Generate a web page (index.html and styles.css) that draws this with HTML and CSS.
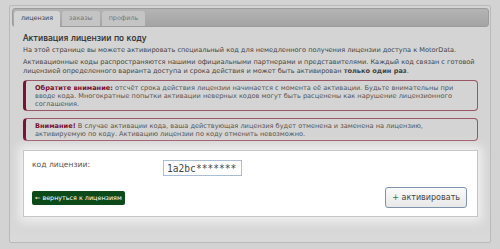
FILE: index.html
```
<!DOCTYPE html>
<html lang="ru">
<head>
<meta charset="utf-8">
<link rel="stylesheet" href="styles.css">
</head>
<body>
<div class="panel">
  <div class="tabbar">
    <div class="tab active">лицензия</div>
    <div class="tab">заказы</div>
    <div class="tab">профиль</div>
  </div>
  <div class="content">
    <h1 class="title">Активация лицензии по коду</h1>
    <p class="text">На этой странице вы можете активировать специальный код для немедленного получения лицензии доступа к MotorData.</p>
    <p class="text text2">Активационные коды распространяются нашими официальными партнерами и представителями. Каждый код связан с готовой лицензией определенного варианта доступа и срока действия и может быть активирован <b>только один раз</b>.</p>
    <div class="notice"><b>Обратите внимание:</b> отсчёт срока действия лицензии начинается с момента её активации. Будьте внимательны при вводе кода. Многократные попытки активации неверных кодов могут быть расценены как нарушение лицензионного соглашения.</div>
    <div class="notice notice2"><b>Внимание!</b> В случае активации кода, ваша действующая лицензия будет отменена и заменена на лицензию, активируемую по коду. Активацию лицензии по коду отменить невозможно.</div>
    <div class="form">
      <div class="row">
        <label class="label">код лицензии:</label>
        <input class="input" type="text" value="1a2bc*******">
      </div>
      <div class="actions">
        <button class="back">← вернуться к лицензиям</button>
        <button class="activate"><span class="plus">+</span> активировать</button>
      </div>
    </div>
  </div>
</div>
</body>
</html>
```
FILE: styles.css
```
* { box-sizing: border-box; }
html, body { margin: 0; padding: 0; }
body {
  background: #d3d3d3;
  font-family: "DejaVu Sans", Verdana, sans-serif;
  color: #444;
  width: 500px;
  height: 249px;
  overflow: hidden;
  padding: 5px 9px 0 9px;
}
.panel {
  width: 482px;
  height: 238px;
  border: 1px solid #b9b9b9;
  border-radius: 2px;
  background: linear-gradient(#d4d4d4, #d4d4d4 85%, #dadada);
  padding: 1px 1px 0 2px;
}
.tabbar {
  height: 19px;
  margin-top: 1px;
  background: linear-gradient(#b4b4b4, #a4a4a4);
  border: 1px solid #9c9c9c;
  border-radius: 3px;
  display: flex;
  align-items: flex-end;
  gap: 2px;
  padding-left: 1px;
}
.tab {
  height: 15px;
  line-height: 14px;
  padding: 0 7px;
  font-size: 6.4px;
  color: #777;
  background: #c4c4c4;
  border-radius: 3px 3px 0 0;
}
.tab.active {
  background: #d4d4d4;
  color: #444;
  height: 16px;
  margin-bottom: -1px;
  line-height: 15px;
}
.content {
  padding: 6px 11px 0 11px;
}
.title {
  margin: 0 0 1px 0;
  font-size: 8px;
  font-weight: normal;
  color: #2a2a2a;
  line-height: 12px;
  -webkit-text-stroke: 0.2px #2a2a2a;
}
.text {
  margin: 0;
  font-size: 6.6px;
  line-height: 9px;
  color: #444;
}
.text2 { margin-top: 3px; }
.notice {
  margin: 4px 0 0 0;
  border: 1px solid #9a5566;
  border-left: 3px solid #7a1232;
  border-radius: 4px;
  padding: 3px 22px 2px 9px;
  font-size: 6.6px;
  line-height: 8px;
  color: #555;
}
.notice2 { margin-top: 7px; }
.notice b { color: #7a1232; }
.form {
  margin-top: 9px;
  background: #fff;
  border: 1px solid #c6c6c6;
  box-shadow: 0 0 10px 4px rgba(255,255,255,0.7);
  height: 67px;
  padding: 9px 10px 0 8px;
}
.row {
  display: flex;
  align-items: flex-start;
}
.label {
  width: 131px;
  font-size: 7.6px;
  line-height: 10px;
  color: #555;
}
.input {
  width: 79px;
  height: 16px;
  border: 1px solid #a9bed6;
  font-family: "DejaVu Sans Mono", monospace;
  font-size: 9.6px;
  color: #444;
  padding: 0 2px 0 3px;
}
.actions {
  display: flex;
  justify-content: space-between;
  align-items: center;
  margin-top: 11px;
}
.back {
  background: #0c4a1a;
  color: #fff;
  border: none;
  border-radius: 2px;
  font-family: "DejaVu Sans", sans-serif;
  font-size: 6.4px;
  height: 14px;
  padding: 0 3px;
  margin-top: 1px;
}
.activate {
  background: linear-gradient(#fafafa, #e8e8e8);
  border: 1px solid #7f93ad;
  border-radius: 3px;
  height: 21px;
  padding: 0 6px;
  font-family: "DejaVu Sans", sans-serif;
  font-size: 8px;
  color: #444;
}
.plus { color: #2a7a3a; }
```
